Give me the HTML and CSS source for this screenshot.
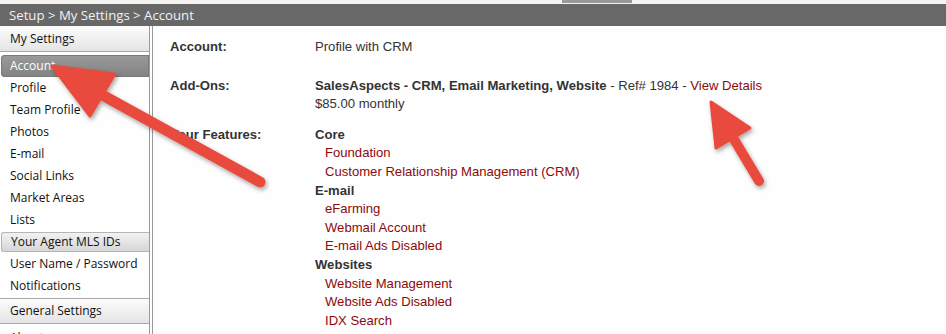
FILE: index.html
```html
<!DOCTYPE html>
<html>
<head>
<meta charset="utf-8">
<link rel="stylesheet" href="styles.css">
</head>
<body>
<div class="topstrip"><span class="tab"></span></div>
<div class="crumb">Setup &gt; My Settings &gt; Account</div>
<div class="layout">
  <nav class="sidebar">
    <div class="head">My Settings</div>
    <div class="item active">Account</div>
    <div class="item">Profile</div>
    <div class="item">Team Profile</div>
    <div class="item">Photos</div>
    <div class="item">E-mail</div>
    <div class="item">Social Links</div>
    <div class="item">Market Areas</div>
    <div class="item">Lists</div>
    <div class="item button">Your Agent MLS IDs</div>
    <div class="item">User Name / Password</div>
    <div class="item">Notifications</div>
    <div class="head head-top">General Settings</div>
    <div class="item">About...</div>
  </nav>
  <main class="main">
    <div class="row row-account">
      <div class="label">Account:</div>
      <div class="value">Profile with CRM</div>
    </div>
    <div class="row row-addons">
      <div class="label">Add-Ons:</div>
      <div class="value"><b>SalesAspects - CRM, Email Marketing, Website</b> - Ref# 1984 - <a class="link" href="#">View Details</a><br>$85.00 monthly</div>
    </div>
    <div class="row">
      <div class="label">Your Features:</div>
      <div class="value">
        <div class="group">Core</div>
        <a class="feat" href="#">Foundation</a>
        <a class="feat" href="#">Customer Relationship Management (CRM)</a>
        <div class="group">E-mail</div>
        <a class="feat" href="#">eFarming</a>
        <a class="feat" href="#">Webmail Account</a>
        <a class="feat" href="#">E-mail Ads Disabled</a>
        <div class="group">Websites</div>
        <a class="feat" href="#">Website Management</a>
        <a class="feat" href="#">Website Ads Disabled</a>
        <a class="feat" href="#">IDX Search</a>
        <a class="feat" href="#">Mobile website</a>
      </div>
    </div>
  </main>
</div>
<svg class="arrows" width="946" height="334" viewBox="0 0 946 334">
  <defs>
    <filter id="sh" x="-20%" y="-20%" width="140%" height="140%">
      <feDropShadow dx="1.5" dy="2.5" stdDeviation="2" flood-color="#000" flood-opacity="0.35"/>
    </filter>
  </defs>
  <g filter="url(#sh)" fill="#e84c3d" stroke="#e84c3d">
    <line x1="95" y1="91" x2="260" y2="182" stroke-width="11" stroke-linecap="round"/>
    <polygon points="52,66 90,116 115,74" stroke-width="3" stroke-linejoin="round"/>
    <line x1="732" y1="136" x2="759" y2="181" stroke-width="10" stroke-linecap="round"/>
    <polygon points="711,102 716,148 750,128" stroke-width="3" stroke-linejoin="round"/>
  </g>
</svg>
</body>
</html>
```
FILE: styles.css
```css
html, body {
  margin: 0;
  padding: 0;
  background: #fefefe;
  overflow: hidden;
}
body {
  width: 946px;
  height: 334px;
  position: relative;
  font-family: "Liberation Sans", Arial, sans-serif;
  font-size: 13.1px;
  color: #333;
}
.topstrip {
  height: 4px;
  background: #f4f2ee;
  position: relative;
}
.topstrip .tab {
  position: absolute;
  left: 562px;
  top: 0;
  width: 70px;
  height: 3px;
  background: #999;
}
.crumb {
  height: 22px;
  line-height: 22px;
  background: #686868;
  color: #f2f2f2;
  padding-left: 9px;
  font-family: "Open Sans", "Noto Sans", sans-serif;
  font-size: 13.2px;
}
.layout {
  display: flex;
  height: 308px;
}
.sidebar {
  width: 149px;
  flex: none;
  border-right: 1px solid #9a9a9a;
  font-family: "Open Sans", "Noto Sans", sans-serif;
  font-size: 12px;
  color: #111;
}
.head {
  height: 25px;
  line-height: 25px;
  padding-left: 10px;
  background: linear-gradient(#fcfcfc, #e4e4e4);
  border-bottom: 1px solid #a8a8a8;
  margin-bottom: 3px;
}
.head-top {
  border-top: 1px solid #a8a8a8;
  margin-top: 1px;
  height: 24px;
  line-height: 24px;
}
.item {
  height: 22px;
  line-height: 22px;
  padding-left: 10px;
}
.item.active {
  background: linear-gradient(#9b9b9b, #828282);
  color: #fff;
  border-radius: 4px 0 0 4px;
  margin-left: 1px;
  padding-left: 9px;
  box-shadow: inset 0 0 0 1px #7a7a7a;
}
.item.button {
  margin-left: 1px;
  padding-left: 9px;
  height: 18px;
  line-height: 18px;
  margin-top: 1px;
  margin-bottom: 1px;
  background: linear-gradient(#f2f2f2, #d6d6d6);
  border: 1px solid #b5b5b5;
  border-right: none;
  border-radius: 3px 0 0 3px;
}
.main {
  margin-left: 2px;
  border-left: 1px solid #9a9a9a;
  flex: 1;
  padding: 12px 0 0 17px;
}
.row {
  display: grid;
  grid-template-columns: 145px 1fr;
  line-height: 18.6px;
}
.row-account {
  margin-bottom: 20px;
}
.row-addons {
  margin-bottom: 12px;
}
.label {
  font-weight: bold;
}
.value b {
  font-weight: bold;
}
.link, .feat {
  color: #8b0a0a;
  text-decoration: none;
}
.group {
  font-weight: bold;
}
.feat {
  display: block;
  padding-left: 10px;
}
.arrows {
  position: absolute;
  left: 0;
  top: 0;
  pointer-events: none;
}
```
